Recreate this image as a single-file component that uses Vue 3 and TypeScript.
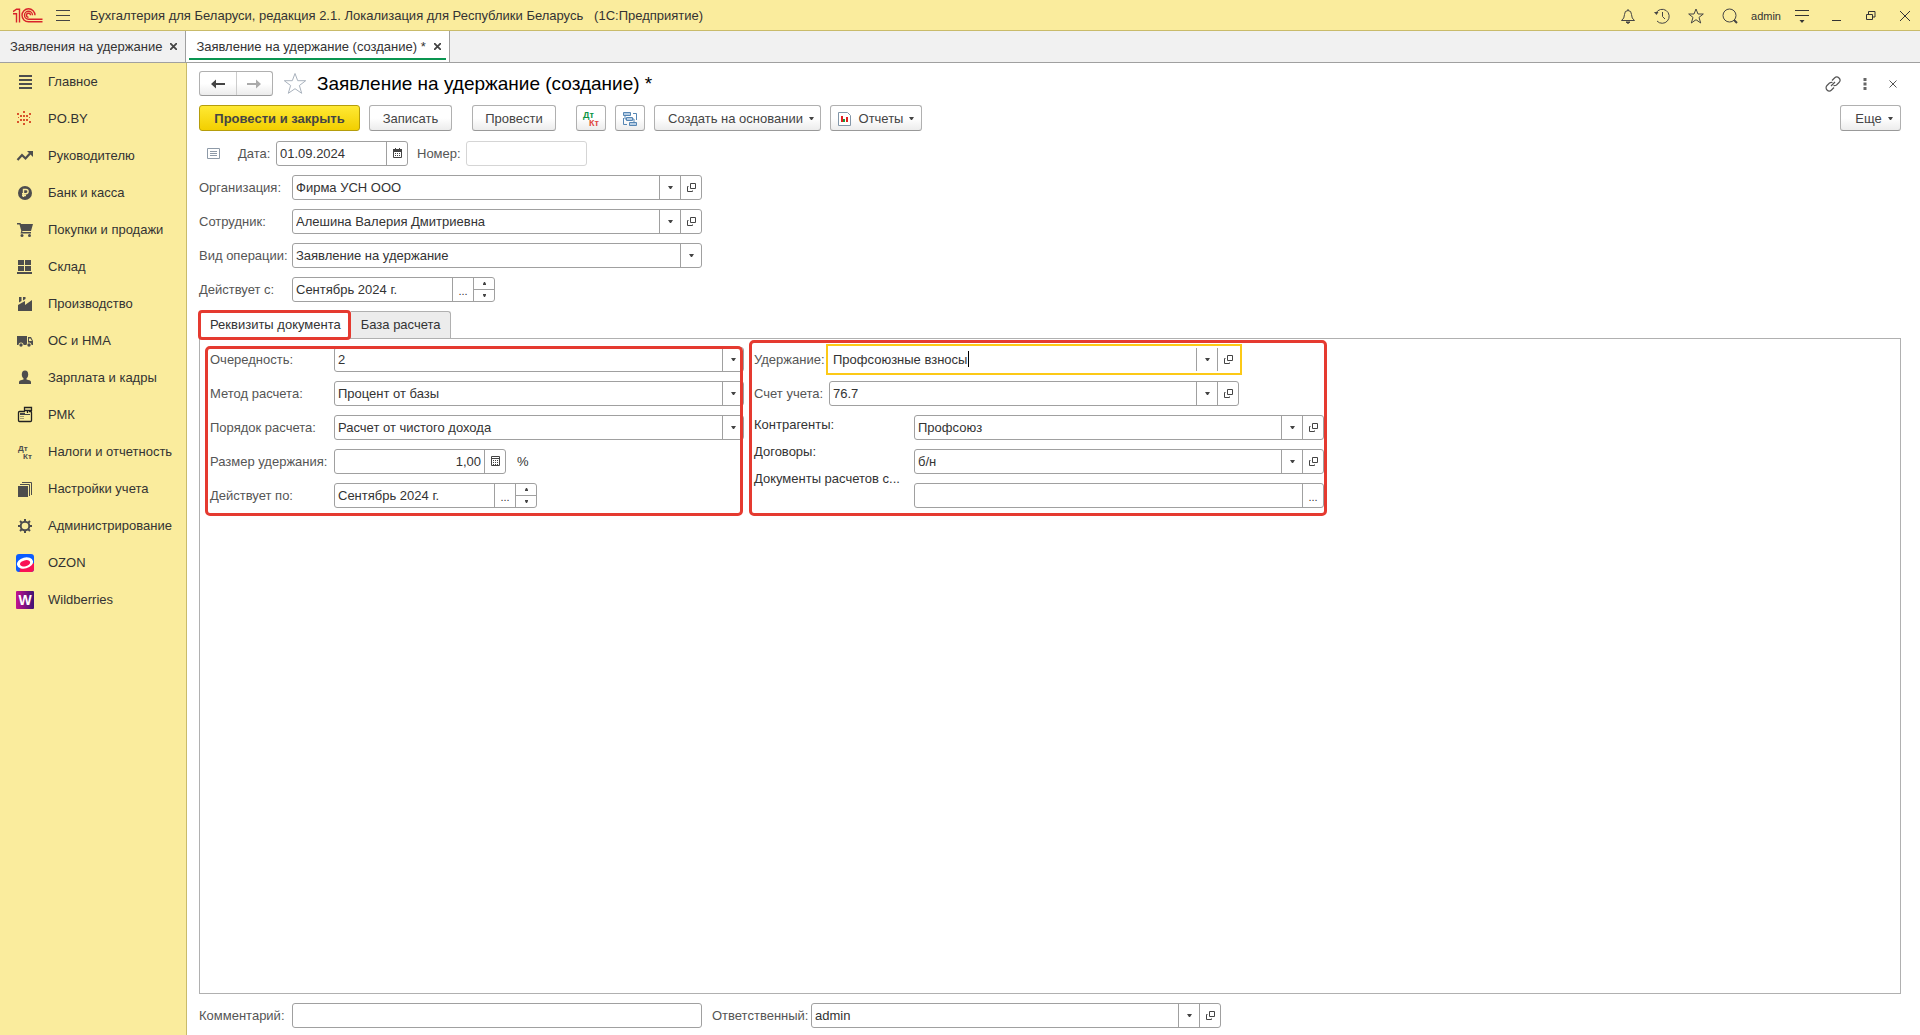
<script setup lang="ts">
import { h, ref, type FunctionalComponent } from 'vue'

type Kind = 'ref' | 'select' | 'period' | 'amount' | 'date' | 'more' | 'plain'

interface Field {
  id: string
  label: string
  value: string
  kind: Kind
  size?: string
}

const icon = (name: string, size = 13) =>
  h('svg', { width: size, height: size, 'aria-hidden': 'true' }, [h('use', { href: '#' + name })])

const iconButton = (name: string, title: string) =>
  h('button', { type: 'button', class: 'fb-btn', 'aria-label': title }, [icon(name)])

const FieldBox: FunctionalComponent<{ field: Field }> = ({ field }) => {
  const kind = field.kind
  const parts = []
  if (kind === 'select') {
    parts.push(
      h('select', { id: field.id }, [h('option', field.value)]),
      h('span', { class: 'fb-btn fb-arrow' }, [icon('i-caret')]),
    )
  } else {
    parts.push(h('input', { id: field.id, type: 'text', value: field.value, autocomplete: 'off' }))
  }
  if (field.size === 'is-active') parts.push(h('span', { class: 'fb-cursor' }))
  if (kind === 'ref') parts.push(iconButton('i-caret', 'Выбрать из списка'), iconButton('i-open', 'Открыть'))
  if (kind === 'date') parts.push(iconButton('i-calendar', 'Календарь'))
  if (kind === 'amount') parts.push(iconButton('i-calc', 'Калькулятор'))
  if (kind === 'period' || kind === 'more') parts.push(h('button', { type: 'button', class: 'fb-btn fb-dots' }, '...'))
  if (kind === 'period') {
    parts.push(
      h('span', { class: 'fb-spin' }, [
        h('button', { type: 'button', 'aria-label': 'Больше' }, [icon('i-up', 7)]),
        h('button', { type: 'button', 'aria-label': 'Меньше' }, [icon('i-down', 7)]),
      ]),
    )
  }
  return h('div', { class: ['fb', 'fb-' + kind, field.size] }, parts)
}
FieldBox.props = ['field']

const sections = [
  { icon: 's-main', title: 'Главное' },
  { icon: 's-poby', title: 'PO.BY' },
  { icon: 's-chief', title: 'Руководителю' },
  { icon: 's-bank', title: 'Банк и касса' },
  { icon: 's-cart', title: 'Покупки и продажи' },
  { icon: 's-stock', title: 'Склад' },
  { icon: 's-factory', title: 'Производство' },
  { icon: 's-truck', title: 'ОС и НМА' },
  { icon: 's-person', title: 'Зарплата и кадры' },
  { icon: 's-cash', title: 'РМК' },
  { icon: 's-dtkt', title: 'Налоги и отчетность' },
  { icon: 's-books', title: 'Настройки учета' },
  { icon: 's-gear', title: 'Администрирование' },
  { icon: 's-ozon', title: 'OZON' },
  { icon: 's-wb', title: 'Wildberries' },
]

const dateField: Field = { id: 'date', label: 'Дата:', value: '01.09.2024', kind: 'date' }
const numberField: Field = { id: 'number', label: 'Номер:', value: '', kind: 'plain', size: 'w-number' }

const headFields: Field[] = [
  { id: 'org', label: 'Организация:', value: 'Фирма УСН ООО', kind: 'ref' },
  { id: 'employee', label: 'Сотрудник:', value: 'Алешина Валерия Дмитриевна', kind: 'ref' },
  { id: 'operation', label: 'Вид операции:', value: 'Заявление на удержание', kind: 'select' },
  { id: 'from', label: 'Действует с:', value: 'Сентябрь 2024 г.', kind: 'period' },
]

const calcFields: Field[] = [
  { id: 'order', label: 'Очередность:', value: '2', kind: 'select' },
  { id: 'method', label: 'Метод расчета:', value: 'Процент от базы', kind: 'select' },
  { id: 'calc-order', label: 'Порядок расчета:', value: 'Расчет от чистого дохода', kind: 'select' },
  { id: 'amount', label: 'Размер удержания:', value: '1,00', kind: 'amount' },
  { id: 'till', label: 'Действует по:', value: 'Сентябрь 2024 г.', kind: 'period' },
]

const accountFields: Field[] = [
  { id: 'deduction', label: 'Удержание:', value: 'Профсоюзные взносы', kind: 'ref', size: 'is-active' },
  { id: 'account', label: 'Счет учета:', value: '76.7', kind: 'ref' },
]

const analyticFields: Field[] = [
  { id: 'partner', label: 'Контрагенты:', value: 'Профсоюз', kind: 'ref' },
  { id: 'contract', label: 'Договоры:', value: 'б/н', kind: 'ref' },
  { id: 'settlement', label: 'Документы расчетов с...', value: '', kind: 'more' },
]

const commentField: Field = { id: 'comment', label: 'Комментарий:', value: '', kind: 'plain' }
const managerField: Field = { id: 'manager', label: 'Ответственный:', value: 'admin', kind: 'ref' }

const activeTab = ref('details')
</script>

<template>
  <div class="app">
    <svg class="sprite" aria-hidden="true">
      <symbol id="i-caret" viewBox="0 0 13 13"><path d="M4 5h5L7 8H6z" fill="#444" /></symbol>
      <symbol id="i-up" viewBox="0 0 7 7"><path d="M3 2h1l1 2v1H2V4z" fill="#444" /></symbol>
      <symbol id="i-down" viewBox="0 0 7 7"><path d="M2 2h3v1L4 5H3L2 3z" fill="#444" /></symbol>
      <symbol id="i-open" viewBox="0 0 13 13">
        <path d="M5.500 2.500h5v5h-5zM3.500 5.500h-1v5h5v-1" fill="none" stroke="#444" />
      </symbol>
      <symbol id="i-calendar" viewBox="0 0 13 13">
        <path d="M2.500 3.500h8v7h-8z" fill="none" stroke="#444" />
        <path d="M2 2h9v3H2zM4 1h1v2H4zM8 1h1v2H8zM4 6h1v1H4zM6 6h1v1H6zM8 6h1v1H8zM4 8h1v1H4zM6 8h1v1H6zM8 8h1v1H8z" fill="#444" />
      </symbol>
      <symbol id="i-calc" viewBox="0 0 13 13">
        <path d="M2.500 1.500h8v9h-8zM2.500 3.500h8" fill="none" stroke="#444" />
        <path d="M4 5h1v1H4zM6 5h1v1H6zM8 5h1v1H8zM4 7h1v1H4zM6 7h1v1H6zM8 7h1v1H8zM4 9h1v1H4zM6 9h1v1H6zM8 9h1v1H8z" fill="#444" />
      </symbol>

      <symbol id="s-main" viewBox="0 0 18 18"><path d="M3 2h13v2H3zM3 6h13v2H3zM3 10h13v2H3zM3 14h13v2H3z" fill="#4d4d4d" /></symbol>
      <symbol id="s-poby" viewBox="0 0 18 18">
        <path d="M7 1h2v2H7zM7 5h2v2H7zM7 9h2v2H7zM7 13h2v2H7zM4 5h2v2H4zM10 5h2v2h-2zM4 9h2v2H4zM10 9h2v2h-2zM1 3h2v2H1zM13 3h2v2h-2zM2 7h1v1H2zM13 7h1v1h-1zM1 11h2v2H1zM13 11h2v2h-2z" fill="#d9532c" />
      </symbol>
      <symbol id="s-chief" viewBox="0 0 18 18">
        <path d="M1.500 13 6 8l3.500 3.500L14 6.500" fill="none" stroke="#4d4d4d" stroke-width="2.200" />
        <path d="M11 4h6v6z" fill="#4d4d4d" />
      </symbol>
      <symbol id="s-bank" viewBox="0 0 18 18">
        <circle cx="9" cy="9" r="7" fill="#4d4d4d" />
        <path d="M7.500 13V5.500h2.500a2 2 0 0 1 0 4.200H6M6 11.500h4" fill="none" stroke="#faec9d" stroke-width="1.400" />
      </symbol>
      <symbol id="s-cart" viewBox="0 0 18 18">
        <path d="M1 2h3.500l.5 1h12l-2 7H6.500l-.4 1H15v1.500H4.500L5.300 10 3.500 3.500H1z" fill="#4d4d4d" />
        <circle cx="6" cy="14.500" r="1.500" fill="#4d4d4d" /><circle cx="13.500" cy="14.500" r="1.500" fill="#4d4d4d" />
      </symbol>
      <symbol id="s-stock" viewBox="0 0 18 18"><path d="M2 2h6v5H2zM9 2h6v5H9zM2 8h6v5H2zM9 8h6v5H9zM1 14h15v2H1z" fill="#4d4d4d" /></symbol>
      <symbol id="s-factory" viewBox="0 0 18 18"><path d="M2 16v-6l7-4v4l7-5v11zM3 2h2.500v4L3 7.500zM7 2h2.500v2L7 5.500z" fill="#4d4d4d" /></symbol>
      <symbol id="s-truck" viewBox="0 0 18 18">
        <path d="M1 4h10v9H1zM12 5h3l2 4v4h-5z" fill="#4d4d4d" /><path d="M13 6.500h1.500L16 9h-3z" fill="#faec9d" />
        <circle cx="5" cy="13" r="2.500" fill="#faec9d" /><circle cx="13" cy="13" r="2.500" fill="#faec9d" />
        <circle cx="5" cy="13" r="1.700" fill="#4d4d4d" /><circle cx="13" cy="13" r="1.700" fill="#4d4d4d" />
      </symbol>
      <symbol id="s-person" viewBox="0 0 18 18">
        <ellipse cx="9" cy="5.500" rx="3.200" ry="4" fill="#4d4d4d" />
        <path d="M7.500 8h3v2.500l3.500 1q1 .5 1 1.500v2H3v-2q0-1 1-1.500l3.500-1z" fill="#4d4d4d" />
      </symbol>
      <symbol id="s-cash" viewBox="0 0 18 18">
        <path d="M9 5.500H3.500q-1 0-1 1v8q0 1 1 1h11q1 0 1-1v-8q0-1-1-1H13M8.500 1.500h7v3h-7zM11.500 5v2" fill="none" stroke="#222" stroke-width="1.300" />
        <path d="M4 7h5v2H4zM4.500 10h1v1h-1zM6.500 10h1v1h-1zM4.500 12h1v1h-1zM6.500 12h1v1h-1zM9 8h5v1H9z" fill="#444" />
      </symbol>
      <symbol id="s-books" viewBox="0 0 18 18">
        <path d="M2 6h10v11H2z" fill="#4d4d4d" /><path d="M4 4.500h9.500V16M6 2.500h9.500V15" fill="none" stroke="#4d4d4d" />
      </symbol>
      <symbol id="s-gear" viewBox="0 0 18 18">
        <circle cx="9" cy="9" r="4.300" fill="none" stroke="#4d4d4d" stroke-width="2" />
        <path d="M9 2v3M9 13v3M2 9h3M13 9h3M4 4l2 2M12 12l2 2M14 4l-2 2M6 12l-2 2" stroke="#4d4d4d" stroke-width="2" />
      </symbol>
      <symbol id="s-ozon" viewBox="0 0 18 18">
        <rect width="18" height="18" rx="3" fill="#0a5cff" />
        <path d="M4 14 18 9v6q0 3-3 3H3q1-1 1-4z" fill="#f91155" />
        <ellipse cx="9" cy="9" rx="8.200" ry="5.500" fill="#fff" transform="rotate(-14 9 9)" />
        <ellipse cx="9" cy="9.300" rx="5.200" ry="3" fill="#f91155" transform="rotate(-14 9 9)" />
      </symbol>
    </svg>

    <header class="titlebar">
      <svg class="logo" width="30" height="16" viewBox="0 0 30 16" aria-label="1С" fill="none" stroke="#d8232a" stroke-width="1.400">
        <path d="M0 3.700 3.500 1.200H6.500V14.500M0 5.700h3.500v8.800" />
        <path d="M22 7.300A6.500 6.500 0 1 0 15.500 13.800H29.500M19.500 7.300A4 4 0 1 0 15.500 11.300H29.500M17.500 7.300a2 2 0 1 0-2 2" />
      </svg>
      <button class="plain" aria-label="Меню"><svg width="14" height="12" viewBox="0 0 14 12"><path d="M0 .5h14M0 5.500h14M0 10.500h14" stroke="#444" /></svg></button>
      <h1>Бухгалтерия для Беларуси, редакция 2.1. Локализация для Республики Беларусь &nbsp; (1С:Предприятие)</h1>
      <div class="tools">
        <button class="plain" aria-label="Уведомления">
          <svg width="16" height="16" viewBox="0 0 16 16" fill="none" stroke="#444"><path d="M8 1v1.500M1.500 12.500q3-2 3-6a3.500 4 0 0 1 7 0q0 4 3 6z" /><path d="M6 14h4l-2 1.500z" fill="#444" /></svg>
        </button>
        <button class="plain" aria-label="История">
          <svg width="16" height="16" viewBox="0 0 16 16" fill="none" stroke="#444"><path d="M2 5A7 7 0 1 1 3 13M8.500 4v4.500L11 11" /><path d="M0 4h4.500L2.500 7z" fill="#444" stroke="none" /></svg>
        </button>
        <button class="plain" aria-label="Избранное">
          <svg width="16" height="16" viewBox="0 0 16 16" fill="none" stroke="#444"><path d="m8 1 2 5h5.300l-4.300 3.400L12.700 15 8 11.700 3.300 15 5 9.400.7 6H6z" /></svg>
        </button>
        <button class="plain" aria-label="Поиск">
          <svg width="16" height="16" viewBox="0 0 16 16" fill="none" stroke="#444"><circle cx="7.500" cy="7.500" r="6.500" /><path d="m12 12 3 3" stroke-width="2" /></svg>
        </button>
        <span class="user">admin</span>
        <button class="plain" aria-label="Сервис">
          <svg width="16" height="14" viewBox="0 0 16 14"><path d="M1 1.500h14M1 6.500h14" stroke="#333" /><path d="M5.500 11h5L8 14z" fill="#333" /></svg>
        </button>
        <div class="win">
          <button class="plain" aria-label="Свернуть"><svg width="10" height="10" viewBox="0 0 10 10"><path d="M0 9.500h9" stroke="#333" /></svg></button>
          <button class="plain" aria-label="Развернуть"><svg width="10" height="10" viewBox="0 0 10 10" fill="none" stroke="#333"><path d="M.5 3.500h6v5h-6zM2.500 3V.5h6.500v5.500H7" /></svg></button>
          <button class="plain" aria-label="Закрыть"><svg width="10" height="10" viewBox="0 0 10 10"><path d="m0 0 10 10M10 0 0 10" stroke="#333" /></svg></button>
        </div>
      </div>
    </header>

    <nav class="windows">
      <div class="window">
        <a href="#list">Заявления на удержание</a>
        <button class="plain" aria-label="Закрыть"><svg width="7" height="7" viewBox="0 0 7 7"><path d="m0 0 7 7M7 0 0 7" stroke="#444" stroke-width="1.800" /></svg></button>
      </div>
      <div class="window current">
        <a href="#new">Заявление на удержание (создание) *</a>
        <button class="plain" aria-label="Закрыть"><svg width="7" height="7" viewBox="0 0 7 7"><path d="m0 0 7 7M7 0 0 7" stroke="#444" stroke-width="1.800" /></svg></button>
      </div>
    </nav>

    <div class="body">
      <nav class="sections">
        <a v-for="s in sections" :key="s.title" href="#section">
          <svg v-if="s.icon === 's-dtkt'" width="18" height="18" font-size="8" font-weight="700" fill="#4d4d4d" aria-hidden="true">
            <text x="2" y="8">Дт</text><text x="7" y="16">Кт</text>
          </svg>
          <svg v-else-if="s.icon === 's-wb'" width="18" height="18" aria-hidden="true">
            <linearGradient id="wb" x1="0" x2="1"><stop stop-color="#c3128f" /><stop offset="1" stop-color="#3f1274" /></linearGradient>
            <rect width="18" height="18" rx="1" fill="url(#wb)" />
            <text x="9" y="14" text-anchor="middle" font-size="14" font-weight="700" fill="#fff">W</text>
          </svg>
          <svg v-else width="18" height="18" aria-hidden="true"><use :href="'#' + s.icon" /></svg>
          {{ s.title }}
        </a>
      </nav>

      <main>
        <div class="heading">
          <div class="nav-pair">
            <button aria-label="Назад"><svg width="14" height="10" viewBox="0 0 14 10"><path d="M0 5l5-4.500V4h9v2H5v3.500z" fill="#444" /></svg></button>
            <button aria-label="Вперед"><svg width="14" height="10" viewBox="0 0 14 10"><path d="M14 5 9 .5V4H0v2h9v3.500z" fill="#aaa" /></svg></button>
          </div>
          <button class="plain" aria-label="В избранное">
            <svg width="24" height="23" viewBox="0 0 24 23" fill="none" stroke="#a9b2bd"><path d="m12 1.500 2.700 7.200h8l-6.300 4.800 2.300 7.800L12 16.700l-6.700 4.600 2.300-7.800L1.300 8.700h8z" /></svg>
          </button>
          <h2>Заявление на удержание (создание) *</h2>
          <div class="form-tools">
            <button class="plain" aria-label="Ссылка">
              <svg width="16" height="16" viewBox="0 0 16 16" fill="none" stroke="#555" stroke-width="1.200"><path d="M7 4.500 9.500 2a2.800 2.800 0 0 1 4.500 4.500L11.500 9Q10 10 8.500 9.500M9 11.500 6.500 14A2.800 2.800 0 0 1 2 9.500L4.500 7Q6 6 7.500 6.500M6 10l4-4" /></svg>
            </button>
            <button class="plain" aria-label="Еще"><svg width="4" height="12" viewBox="0 0 4 12"><path d="M.5 0h3v3h-3zM.5 4.500h3v3h-3zM.5 9h3v3h-3z" fill="#666" /></svg></button>
            <button class="plain" aria-label="Закрыть форму"><svg width="8" height="8" viewBox="0 0 8 8"><path d="m.5.5 7 7m0-7-7 7" stroke="#555" /></svg></button>
          </div>
        </div>

        <div class="commands">
          <button class="cmd primary">Провести и закрыть</button>
          <button class="cmd save">Записать</button>
          <button class="cmd post">Провести</button>
          <button class="cmd square" aria-label="Проводки">
            <svg width="18" height="18" viewBox="0 0 18 18"><text x="1" y="8" font-size="9" font-weight="700" fill="#0b9444">Дт</text><text x="7" y="16" font-size="9" font-weight="700" fill="#e0483e">Кт</text></svg>
          </button>
          <button class="cmd square" aria-label="Структура подчиненности">
            <svg width="16" height="16" viewBox="0 0 16 16" stroke="#5686b4" fill="#b5cde4"><path d="M1.500 1.500h7v3h-7zM4.500 6.500h6v3h-6zM7.500 11.500h7v3h-7z" /><path d="M11 2.500h3.500V9M1.500 7v6.500H5M11 8h1v3.500M3 5v3h1.500" fill="none" /></svg>
          </button>
          <button class="cmd based">Создать на основании <svg width="5" height="3"><path d="M0 0h5L3 3H2z" fill="#444" /></svg></button>
          <button class="cmd reports">
            <svg class="chart" width="13" height="14" viewBox="0 0 13 14"><path d="M.5.5h9l3 3v10H.5z" fill="#fff" stroke="#8296a8" /><path d="M3 4h2v6H3z" fill="#e02020" /><path d="M5 7h2v3H5z" fill="#1a9a3c" /><path d="M8 5h2v5H8z" fill="#e02020" /></svg>
            Отчеты <svg width="5" height="3"><path d="M0 0h5L3 3H2z" fill="#444" /></svg>
          </button>
          <button class="cmd more">Еще <svg width="5" height="3"><path d="M0 0h5L3 3H2z" fill="#444" /></svg></button>
        </div>

        <div class="date-row">
          <svg width="13" height="11" viewBox="0 0 13 11"><path d="M.5.5h12v10H.5z" fill="#fff" stroke="#8e9aa8" /><path d="M3 3.500h7M3 5.500h7M3 7.500h7" stroke="#8e9aa8" /></svg>
          <label for="date">{{ dateField.label }}</label>
          <FieldBox :field="dateField" />
          <label for="number">{{ numberField.label }}</label>
          <FieldBox :field="numberField" />
        </div>

        <div class="fields head">
          <div v-for="f in headFields" :key="f.id" class="row">
            <label :for="f.id">{{ f.label }}</label>
            <FieldBox :field="f" />
          </div>
        </div>

        <div class="tabs" role="tablist">
          <button role="tab" :class="{ on: activeTab === 'details' }" @click="activeTab = 'details'">Реквизиты документа</button>
          <button role="tab" :class="{ on: activeTab === 'base' }" @click="activeTab = 'base'">База расчета</button>
        </div>

        <section class="panel">
          <div class="group calc">
            <div v-for="f in calcFields" :key="f.id" class="row">
              <label :for="f.id">{{ f.label }}</label>
              <FieldBox :field="f" />
              <span v-if="f.kind === 'amount'" class="unit">%</span>
            </div>
          </div>
          <div class="group accounts">
            <div v-for="f in accountFields" :key="f.id" class="row">
              <label :for="f.id">{{ f.label }}</label>
              <FieldBox :field="f" />
            </div>
            <div class="analytics">
              <div class="names">
                <label v-for="f in analyticFields" :key="f.id" :for="f.id">{{ f.label }}</label>
              </div>
              <div class="values">
                <FieldBox v-for="f in analyticFields" :key="f.id" :field="f" />
              </div>
            </div>
          </div>
        </section>

        <footer>
          <label for="comment">{{ commentField.label }}</label>
          <FieldBox :field="commentField" />
          <label for="manager" class="second">{{ managerField.label }}</label>
          <FieldBox :field="managerField" />
        </footer>
      </main>
    </div>
  </div>
</template>

<style>
body {
  margin: 0;
}
*,
*::after {
  box-sizing: border-box;
}
button,
input,
select {
  margin: 0;
  padding: 0;
  color: inherit;
  font: inherit;
}
svg {
  display: block;
  flex: none;
}
</style>

<style scoped>
.app {
  display: flex;
  flex-direction: column;
  min-height: 100vh;
  background: #fff;
  color: #333;
  font: 13px/16px "Liberation Sans", Arial, sans-serif;
}
.sprite {
  position: absolute;
  width: 0;
  height: 0;
}
h1,
h2 {
  margin: 0;
  font-weight: 400;
}
a {
  color: inherit;
  text-decoration: none;
}
.plain {
  display: flex;
  background: none;
  border: 0;
}

.titlebar {
  display: flex;
  align-items: center;
  height: 31px;
  padding: 1px 10px 0 13px;
  background: #faec9d;
  border-bottom: 1px solid #c9bb6a;
}
.logo {
  margin-right: 13px;
}
h1 {
  margin-left: 20px;
  font-size: 13px;
}
.tools {
  display: flex;
  align-items: center;
  gap: 18px;
  margin-left: auto;
}
.user {
  margin: 0 -5px;
  font-size: 11px;
}
.win {
  display: flex;
  gap: 24px;
  margin-left: 4px;
}

.windows {
  display: flex;
  height: 32px;
  background: #f1f1f1;
  border-bottom: 1px solid #a0a0a0;
}
.window {
  display: flex;
  align-items: center;
  gap: 8px;
  padding: 0 8px 0 10px;
  border-right: 1px solid #a0a0a0;
}
.window.current {
  background: #fff linear-gradient(#0a9550, #0a9550) 3px 27px / calc(100% - 6px) 2px no-repeat;
}

.body {
  display: flex;
  flex: 1;
}
.sections {
  flex: none;
  width: 187px;
  background: #faec9d;
  border-right: 1px solid #c9bb6a;
}
.sections a {
  display: flex;
  align-items: center;
  gap: 14px;
  height: 37px;
  padding: 1px 0 0 16px;
}

main {
  display: flex;
  flex-direction: column;
  flex: 1;
  min-width: 0;
  padding: 8px 19px 7px 12px;
}
.heading {
  display: flex;
  align-items: center;
  height: 25px;
  gap: 10px;
}
.nav-pair {
  display: flex;
  width: 74px;
  height: 25px;
  border: 1px solid #b0b0b0;
  border-bottom-color: #999;
  border-radius: 3px;
  background: linear-gradient(#fff 50%, #ececec);
}
.nav-pair button {
  display: flex;
  flex: 1;
  align-items: center;
  justify-content: center;
  background: none;
  border: 0;
}
.nav-pair button + button {
  border-left: 1px solid #ccc;
}
h2 {
  color: #000;
  font-size: 19px;
  line-height: 24px;
}
.form-tools {
  display: flex;
  align-items: center;
  gap: 22px;
  margin: 0 4px 0 auto;
}

.commands {
  display: flex;
  gap: 9px;
  margin-top: 9px;
}
.cmd {
  display: flex;
  align-items: center;
  justify-content: center;
  gap: 6px;
  height: 26px;
  padding-top: 1px;
  border: 1px solid #b0b0b0;
  border-bottom-color: #999;
  border-radius: 3px;
  background: linear-gradient(#fff 50%, #ececec);
  color: #444;
}
.cmd.primary {
  width: 161px;
  border-color: #b59d0b;
  background: linear-gradient(#ffe934, #f2cf00);
  font-weight: 700;
}
.save {
  width: 83px;
}
.post {
  width: 84px;
  margin: 0 11px;
}
.square {
  width: 30px;
}
.based {
  width: 167px;
  padding-left: 7px;
}
.reports {
  width: 92px;
}
.chart {
  margin-right: 2px;
}
.more {
  width: 61px;
  margin-left: auto;
  padding-left: 7px;
}

label {
  color: #555;
  white-space: nowrap;
}
.date-row {
  display: flex;
  align-items: center;
  margin: 10px 0 9px;
  padding-left: 8px;
}
.date-row label {
  width: 38px;
  margin-left: 18px;
}
.date-row label + :deep(.fb) + label {
  width: 49px;
  margin-left: 9px;
}
.row {
  display: flex;
  align-items: center;
  height: 25px;
}
.fields,
.group {
  display: flex;
  flex-direction: column;
  gap: 9px;
}
.head label,
footer label {
  width: 93px;
}

.app :deep(.fb) {
  display: flex;
  position: relative;
  flex: none;
  width: 410px;
  height: 25px;
  border: 1px solid #a0a0a0;
  border-radius: 3px;
  background: #fff;
  color: #333;
}
.app :deep(.fb-period) {
  width: 203px;
}
.app :deep(.fb-amount) {
  width: 172px;
}
.app :deep(.fb-date) {
  width: 132px;
}
.app :deep(.w-number) {
  width: 121px;
  border-color: #d5d5d5;
}
.app :deep(.fb input),
.app :deep(.fb select) {
  flex: 1;
  min-width: 0;
  padding: 0 3px;
  border: 0;
  outline: 0;
  background: none;
  appearance: none;
}
.app :deep(.fb-amount input) {
  text-align: right;
}
.app :deep(.fb-btn) {
  display: flex;
  align-items: center;
  justify-content: center;
  flex: none;
  width: 21px;
  border: 0;
  border-left: 1px solid #a0a0a0;
  background: none;
}
.app :deep(.fb-arrow) {
  pointer-events: none;
}
.app :deep(.fb-dots) {
  padding-top: 3px;
  font-size: 11px;
}
.app :deep(.fb-spin) {
  display: flex;
  flex-direction: column;
  width: 21px;
  border-left: 1px solid #a0a0a0;
}
.app :deep(.fb-spin button) {
  display: flex;
  flex: 1;
  align-items: center;
  justify-content: center;
  border: 0;
  background: none;
}
.app :deep(.fb-spin button + button) {
  border-top: 1px solid #a0a0a0;
}
.app :deep(.is-active) {
  width: 416px;
  height: 31px;
  margin: -3px;
  padding: 2px;
  border: 2px solid #fcc917;
  border-radius: 0;
}
.app :deep(.fb-cursor) {
  position: absolute;
  top: 5px;
  left: 140px;
  width: 1px;
  height: 16px;
  background: #000;
}

.tabs {
  display: flex;
  height: 27px;
  margin-top: 9px;
  z-index: 1;
}
.tabs button {
  position: relative;
  padding: 0 9px 0 10px;
  border: 1px solid #b0b0b0;
  border-left: 0;
  border-bottom: 0;
  border-radius: 0 3px 0 0;
  background: #ececec;
}
.tabs .on {
  border-left: 1px solid #b0b0b0;
  background: #fff;
}
.tabs .on::after {
  content: "";
  position: absolute;
  inset: -2px -1px -2px -2px;
  border: 3px solid #e53a30;
  border-radius: 4px;
}

.panel {
  display: flex;
  align-items: flex-start;
  flex: 1;
  gap: 10px;
  margin-bottom: 9px;
  padding: 8px 10px;
  border: 1px solid #b0b0b0;
}
.group {
  position: relative;
}
.group::after {
  content: "";
  position: absolute;
  border: 3px solid #e53a30;
  border-radius: 5px;
  pointer-events: none;
}
.calc::after {
  inset: -1px 1px -8px -5px;
}
.accounts::after {
  inset: -7px -3px -8px -5px;
}
.calc label {
  width: 124px;
}
.unit {
  margin-left: 11px;
}
.accounts label {
  width: 75px;
}
.analytics {
  display: flex;
}
.analytics .names {
  display: flex;
  flex-direction: column;
  gap: 11px;
  width: 160px;
  padding-top: 2px;
}
.analytics label {
  color: #333;
}
.values {
  display: flex;
  flex-direction: column;
  gap: 9px;
}

footer {
  display: flex;
  align-items: center;
}
footer .second {
  width: 89px;
  margin: 0 10px;
}
</style>
